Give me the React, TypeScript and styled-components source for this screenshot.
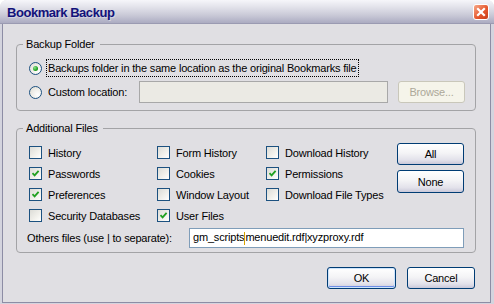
import React from "react";
import styled, { createGlobalStyle } from "styled-components";

const GlobalStyle = createGlobalStyle`
  html, body { margin: 0; padding: 0; background: #ffffff; }
  body {
    font-family: Tahoma, "Liberation Sans", Arial, sans-serif;
    font-size: 11px;
    letter-spacing: -0.18px;
    color: #000;
  }
  * { box-sizing: border-box; }
`;

const Window = styled.div`
  width: 494px;
  height: 304px;
  display: flex;
  flex-direction: column;
  background: #e0dfe3;
  border-radius: 7px 7px 0 0;
  overflow: hidden;
`;

const TitleBar = styled.div`
  height: 24px;
  flex: none;
  display: flex;
  align-items: center;
  padding: 0 5px 0 7px;
  background: linear-gradient(#f6f6fa, #e2e2ea 30%, #c8c8d6 65%, #acacc2 95%, #8e8ea6);
`;

const Title = styled.span`
  flex: 1;
  font-family: "Trebuchet MS", "Liberation Sans", Arial, sans-serif;
  font-weight: bold;
  font-size: 13px;
  letter-spacing: -0.45px;
  color: #12127a;
  text-shadow: 1px 1px 0 #d4d4e0;
`;

const CloseButton = styled.div`
  width: 16px;
  height: 16px;
  border: 1px solid #ffffff;
  border-radius: 3px;
  background: linear-gradient(135deg, #f6a98a, #e6582e 55%, #c83d1a);
  display: flex;
  align-items: center;
  justify-content: center;
`;

const Body = styled.div`
  flex: 1;
  border-style: solid;
  border-color: #d4d4de;
  border-width: 0 3px 1px 2px;
  box-shadow: inset 1px 0 #8d8da5, inset -1px 0 #8d8da5, inset 0 -1px #8d8da5;
  padding: 13px 15px 0 14px;
  display: flex;
  flex-direction: column;
`;

const Group = styled.fieldset<{ $pad: string }>`
  margin: 0;
  border: 1px solid #a3a3a6;
  border-radius: 4px;
  padding: ${(p) => p.$pad};
  min-width: 0;
`;

const Legend = styled.legend`
  padding: 0 5px 0 3px;
  margin-left: -6px;
  line-height: 14px;
  height: 14px;
`;

const RadioRow = styled.div`
  height: 24px;
  display: flex;
  align-items: center;
`;

const RadioCircle = styled.span<{ $checked?: boolean }>`
  width: 13px;
  height: 13px;
  flex: none;
  border-radius: 50%;
  border: 1px solid #1c5180;
  background: radial-gradient(circle at 70% 70%, #ffffff, #eceae4 60%, #dcd9d0);
  display: flex;
  align-items: center;
  justify-content: center;
  margin-right: 5px;
  &::after {
    content: "";
    display: ${(p) => (p.$checked ? "block" : "none")};
    width: 5px;
    height: 5px;
    border-radius: 50%;
    background: radial-gradient(circle at 35% 35%, #8ee28e, #21a121 60%, #157515);
  }
`;

const FocusLabel = styled.span`
  outline: 1px dotted #000;
  outline-offset: 0;
  padding: 1px;
  line-height: 14px;
`;

const PlainLabel = styled.span<{ $w?: number }>`
  padding-left: 1px;
  width: ${(p) => (p.$w ? `${p.$w}px` : "auto")};
  flex: none;
  white-space: nowrap;
`;

const TextInput = styled.div<{ $w: number; $h: number; $disabled?: boolean }>`
  width: ${(p) => p.$w}px;
  height: ${(p) => p.$h}px;
  border: 1px solid ${(p) => (p.$disabled ? "#a8a8a8" : "#7f9db9")};
  background: ${(p) => (p.$disabled ? "#ebeae4" : "#ffffff")};
  display: flex;
  align-items: center;
  padding-left: 3px;
  white-space: nowrap;
`;

const Value = styled.span`
  white-space: nowrap;
`;

const Caret = styled.span`
  display: inline-block;
  width: 1px;
  height: 13px;
  background: #d8a200;
  vertical-align: middle;
`;

const Button = styled.button<{ $default?: boolean; $w?: number; $h?: number }>`
  width: ${(p) => p.$w ?? 67}px;
  height: ${(p) => p.$h ?? 22}px;
  flex: none;
  padding: 0;
  font: inherit;
  letter-spacing: inherit;
  color: #000;
  border: 1px solid #003c74;
  border-radius: 3px;
  background: linear-gradient(#ffffff, #f4f4f6 45%, #e2e1ea 80%, #c9c8d9);
  box-shadow: ${(p) =>
    p.$default ? "inset 0 0 0 1px #cde4fc, inset 0 -1px 0 1px #6d8de6" : "none"};
  &:disabled {
    border-color: #c9c7ba;
    background: #f5f4ea;
    color: #aca899;
  }
`;

const FilesGrid = styled.div`
  display: grid;
  grid-template-columns: 128px 109px 131px 67px;
  grid-template-rows: repeat(4, 21px) auto;
`;

const CheckRow = styled.label`
  display: flex;
  align-items: center;
  white-space: nowrap;
`;

const CheckBox = styled.span`
  width: 13px;
  height: 13px;
  flex: none;
  border: 1px solid #1c5180;
  background: linear-gradient(135deg, #dcdcd7, #f2f1ec 60%, #ffffff);
  display: flex;
  align-items: center;
  justify-content: center;
  margin-right: 5px;
`;

const SideButtons = styled.div`
  grid-column: 4;
  grid-row: 1 / span 3;
  display: flex;
  flex-direction: column;
  gap: 5px;
  padding-top: 1px;
`;

const OthersRow = styled.div`
  grid-column: 1 / span 4;
  display: flex;
  align-items: center;
  margin: 2px 0 0 -3px;
`;

const Footer = styled.div`
  display: flex;
  justify-content: flex-end;
  gap: 11px;
  margin-top: 14px;
  padding-right: 1px;
`;

const files: { label: string; checked: boolean; col: number; row: number }[] = [
  { label: "History", checked: false, col: 1, row: 1 },
  { label: "Passwords", checked: true, col: 1, row: 2 },
  { label: "Preferences", checked: true, col: 1, row: 3 },
  { label: "Security Databases", checked: false, col: 1, row: 4 },
  { label: "Form History", checked: false, col: 2, row: 1 },
  { label: "Cookies", checked: false, col: 2, row: 2 },
  { label: "Window Layout", checked: false, col: 2, row: 3 },
  { label: "User Files", checked: true, col: 2, row: 4 },
  { label: "Download History", checked: false, col: 3, row: 1 },
  { label: "Permissions", checked: true, col: 3, row: 2 },
  { label: "Download File Types", checked: false, col: 3, row: 3 },
];

function Check({ checked }: { checked: boolean }) {
  return (
    <CheckBox>
      {checked && (
        <svg width="9" height="9" viewBox="0 0 9 9">
          <path d="M1.5 4.2 L3.6 6.4 L7.6 1.8" fill="none" stroke="#21a121" strokeWidth="1.8" />
        </svg>
      )}
    </CheckBox>
  );
}

export default function App() {
  return (
    <>
      <GlobalStyle />
      <Window>
        <TitleBar>
          <Title>Bookmark Backup</Title>
          <CloseButton>
            <svg width="10" height="10" viewBox="0 0 10 10">
              <path d="M2 2 L8 8 M8 2 L2 8" stroke="#ffffff" strokeWidth="2.2" strokeLinecap="square" />
            </svg>
          </CloseButton>
        </TitleBar>
        <Body>
          <Group $pad="5px 10px 6px 12px">
            <Legend>Backup Folder</Legend>
            <RadioRow>
              <RadioCircle $checked />
              <FocusLabel>Backups folder in the same location as the original Bookmarks file</FocusLabel>
            </RadioRow>
            <RadioRow>
              <RadioCircle />
              <PlainLabel $w={92}>Custom location:</PlainLabel>
              <TextInput $w={249} $h={22} $disabled />
              <Button disabled style={{ marginLeft: 10 }}>
                Browse...
              </Button>
            </RadioRow>
          </Group>
          <Group $pad="7px 8px 4px 12px" style={{ marginTop: 10 }}>
            <Legend>Additional Files</Legend>
            <FilesGrid>
              {files.map((f) => (
                <CheckRow key={f.label} style={{ gridColumn: f.col, gridRow: f.row }}>
                  <Check checked={f.checked} />
                  <PlainLabel>{f.label}</PlainLabel>
                </CheckRow>
              ))}
              <SideButtons>
                <Button>All</Button>
                <Button $h={23}>None</Button>
              </SideButtons>
              <OthersRow>
                <PlainLabel $w={163}>Others files (use | to separate):</PlainLabel>
                <TextInput $w={279} $h={20}>
                  <Value>
                    {"gm_scripts"}
                    <Caret />
                    {"menuedit.rdf|xyzproxy.rdf"}
                  </Value>
                </TextInput>
              </OthersRow>
            </FilesGrid>
          </Group>
          <Footer>
            <Button $default $w={69}>
              OK
            </Button>
            <Button $w={68}>Cancel</Button>
          </Footer>
        </Body>
      </Window>
    </>
  );
}
